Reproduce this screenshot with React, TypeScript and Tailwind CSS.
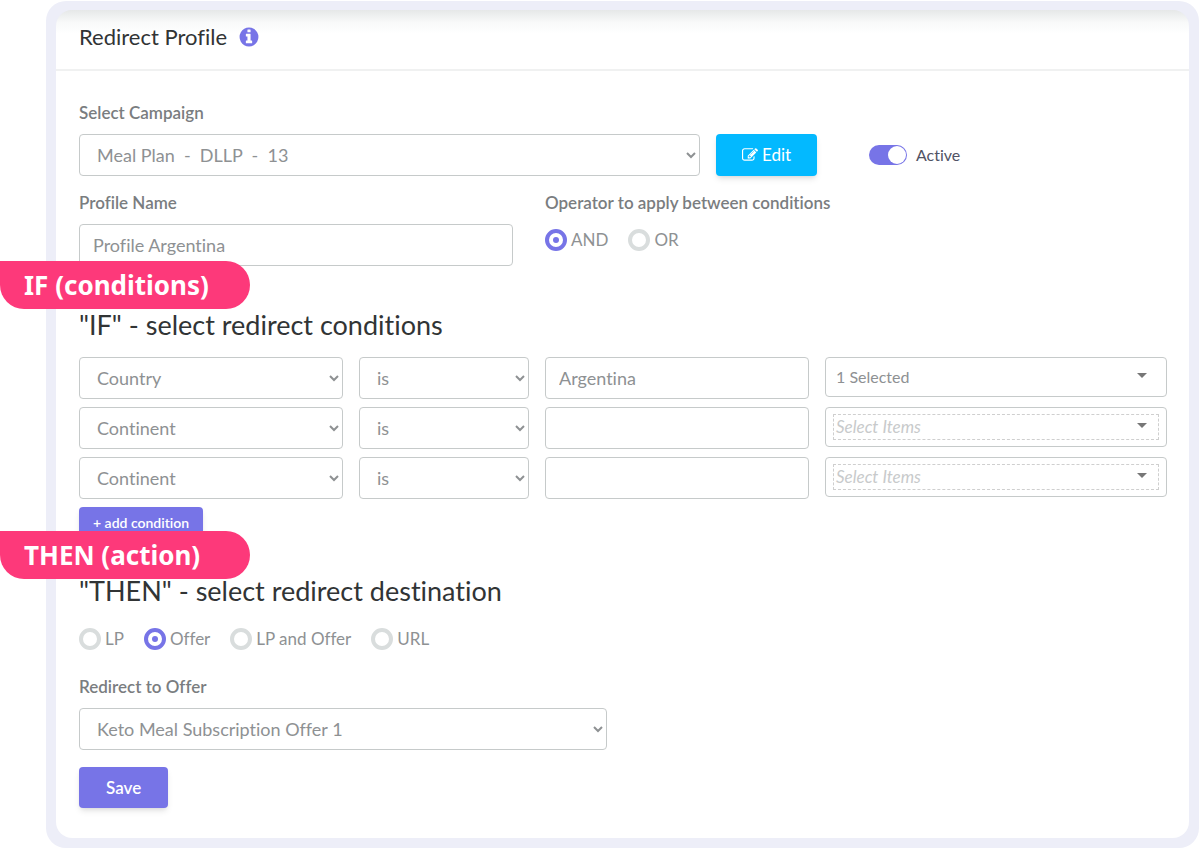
import React from "react";

interface Condition {
  field: string;
  operator: string;
  value: string;
  selected: number;
}

const conditions: Condition[] = [
  { field: "Country", operator: "is", value: "Argentina", selected: 1 },
  { field: "Continent", operator: "is", value: "", selected: 0 },
  { field: "Continent", operator: "is", value: "", selected: 0 },
];

const destinations = ["LP", "Offer", "LP and Offer", "URL"];

const controlClass =
  "h-[42px] w-full rounded border border-[#c6caca] bg-white px-[13px] text-lg text-[#8e9193] outline-none focus:border-[#7774e7]";

const labelClass = "block text-[17px] leading-6 font-semibold text-[#7a7d80]";

const InfoIcon = () => (
  <svg viewBox="0 0 1792 1792" className="size-[22px] fill-[#7774e7]" aria-hidden="true">
    <path d="M1152 1376v-160q0-14-9-23t-23-9h-96v-512q0-14-9-23t-23-9h-320q-14 0-23 9t-9 23v160q0 14 9 23t23 9h96v320h-96q-14 0-23 9t-9 23v160q0 14 9 23t23 9h448q14 0 23-9t9-23zm-128-896v-160q0-14-9-23t-23-9h-192q-14 0-23 9t-9 23v160q0 14 9 23t23 9h192q14 0 23-9t9-23zm640 416q0 209-103 385.5t-279.5 279.5-385.5 103-385.5-103-279.5-279.5-103-385.5 103-385.5 279.5-279.5 385.5-103 385.5 103 279.5 279.5 103 385.5z" />
  </svg>
);

const EditIcon = () => (
  <svg viewBox="0 0 1792 1792" className="size-4 fill-current" aria-hidden="true">
    <path d="M888 1184l116-116-152-152-116 116v56h96v96h56zm440-720q-16-16-33 1l-350 350q-17 17-1 33t33-1l350-350q17-17 1-33zm80 594v190q0 119-84.5 203.5t-203.5 84.5h-832q-119 0-203.5-84.5t-84.5-203.5v-832q0-119 84.5-203.5t203.5-84.5h832q63 0 117 25 15 7 18 23 3 17-9 29l-49 49q-14 14-32 8-23-6-45-6h-832q-66 0-113 47t-47 113v832q0 66 47 113t113 47h832q66 0 113-47t47-113v-126q0-13 9-22l64-64q15-15 35-7t20 29zm-96-738l288 288-672 672h-288v-288zm444 132l-92 92-288-288 92-92q28-28 68-28t68 28l152 152q28 28 28 68t-28 68z" />
  </svg>
);

interface RadioProps {
  name: string;
  label: string;
  defaultChecked?: boolean;
}

const Radio: React.FC<RadioProps> = ({ name, label, defaultChecked }) => (
  <label className="flex items-center gap-1 text-[17px] leading-6 text-[#8e9193]">
    <input
      type="radio"
      name={name}
      defaultChecked={defaultChecked}
      className="grid size-[22px] shrink-0 appearance-none place-items-center rounded-full border-4 border-[#d9dddd] bg-white checked:border-[#7774e7] checked:before:size-[6px] checked:before:rounded-full checked:before:bg-[#7774e7] checked:before:content-['']"
    />
    {label}
  </label>
);

const Banner: React.FC<{ className: string; children: React.ReactNode }> = ({
  className,
  children,
}) => (
  <div
    className={`absolute -left-[79px] flex h-12 w-[250px] items-center rounded-r-3xl rounded-bl-3xl bg-[#fd397a] pl-6 font-['Noto_Sans',sans-serif] text-[26px] font-bold text-white ${className}`}
  >
    {children}
  </div>
);

const MultiSelect: React.FC<{ label: string; selected: number }> = ({ label, selected }) => (
  <button
    type="button"
    aria-label={label}
    className="h-10 w-full rounded border border-[#c6caca] bg-white px-[7px] text-left"
  >
    <span
      className={`flex h-[26px] items-center justify-between border border-dashed pr-[11px] pl-[2px] leading-6 ${
        selected
          ? "border-transparent text-base text-[#8e9193]"
          : "border-[#cfcfcf] text-[17px] text-[#c8cacb] italic"
      }`}
    >
      {selected ? `${selected} Selected` : "Select Items"}
      <svg viewBox="0 0 10 5" className="mb-1 h-[5px] w-[10px] fill-[#777]" aria-hidden="true">
        <path d="M0 0h10L5 5z" />
      </svg>
    </span>
  </button>
);

const App: React.FC = () => {
  return (
    <div className="bg-white pt-px pr-px pl-[46px] font-[Lato,sans-serif] [font-variant-ligatures:none]">
      <main className="rounded-[20px] border-10 border-t-9 border-[#edeef8] bg-[#edeef8]">
        <form
          className="rounded-[16px] bg-white bg-linear-to-b from-[#e6e8e8] via-[#f8f9f9] via-[12px] to-white to-[24px]"
          onSubmit={(e) => e.preventDefault()}
        >
          <header className="flex h-[61px] items-center gap-[11px] border-b-2 border-[#f0f1f1] px-[23px] pb-[6px]">
            <h1 className="text-[22px] leading-8 text-[#313435]">Redirect Profile</h1>
            <InfoIcon />
          </header>

          <div className="pt-[30px] pr-[22px] pb-[30px] pl-[23px]">
            <section>
              <label htmlFor="campaign" className={labelClass}>
                Select Campaign
              </label>
              <div className="mt-[9px] grid grid-cols-[621fr_101fr_334fr] gap-4">
                <select id="campaign" className={controlClass}>
                  <option>{"Meal Plan \u00a0-\u00a0 DLLP \u00a0-\u00a0 13"}</option>
                </select>
                <button
                  type="button"
                  className="flex h-[42px] items-center justify-center gap-1 rounded bg-[#03b9ff] text-[17px] text-white shadow-md"
                >
                  <EditIcon />
                  Edit
                </button>
                <label className="flex items-center gap-[9px] pl-9 text-base text-[#515365]">
                  <input
                    type="checkbox"
                    role="switch"
                    defaultChecked
                    className="flex h-5 w-[38px] appearance-none items-center rounded-full bg-[#c8cacb] px-px before:size-[18px] before:rounded-full before:bg-white before:content-[''] checked:justify-end checked:bg-[#7774e7]"
                  />
                  Active
                </label>
              </div>

              <div className="mt-[15px] grid grid-cols-[434fr_622fr] gap-8">
                <div>
                  <label htmlFor="profile-name" className={labelClass}>
                    Profile Name
                  </label>
                  <input
                    id="profile-name"
                    type="text"
                    defaultValue="Profile Argentina"
                    className={`mt-[9px] ${controlClass}`}
                  />
                </div>
                <fieldset>
                  <legend className={labelClass}>Operator to apply between conditions</legend>
                  <div className="mt-[13px] flex gap-5">
                    <Radio name="operator" label="AND" defaultChecked />
                    <Radio name="operator" label="OR" />
                  </div>
                </fieldset>
              </div>
            </section>

            <section className="relative mt-[43px]">
              <Banner className="-top-12">IF (conditions)</Banner>
              <h2 className="text-[27px] leading-8 text-[#313435]">
                "IF" - select redirect conditions
              </h2>
              <div className="mt-4 flex flex-col gap-2">
                {conditions.map((condition, index) => (
                  <div key={index} className="grid grid-cols-[264fr_170fr_264fr_342fr] gap-4">
                    <select aria-label="Field" className={controlClass}>
                      <option>{condition.field}</option>
                    </select>
                    <select aria-label="Comparison" className={controlClass}>
                      <option>{condition.operator}</option>
                    </select>
                    <input
                      type="text"
                      aria-label="Value"
                      defaultValue={condition.value}
                      className={controlClass}
                    />
                    <MultiSelect label="Items" selected={condition.selected} />
                  </div>
                ))}
              </div>
              <button
                type="button"
                className="mt-2 h-8 rounded bg-[#7774e7] px-[14px] text-sm font-semibold text-white shadow-md"
              >
                + add condition
              </button>
            </section>

            <section className="relative mt-9">
              <Banner className="-top-11">THEN (action)</Banner>
              <h2 className="text-[27px] leading-8 text-[#313435]">
                "THEN" - select redirect destination
              </h2>
              <div className="mt-5 flex gap-5">
                {destinations.map((item) => (
                  <Radio
                    key={item}
                    name="destination"
                    label={item}
                    defaultChecked={item === "Offer"}
                  />
                ))}
              </div>
              <label htmlFor="offer" className={`mt-6 ${labelClass}`}>
                Redirect to Offer
              </label>
              <div className="mt-[9px] grid grid-cols-[528fr_528fr] gap-8">
                <select id="offer" className={controlClass}>
                  <option>Keto Meal Subscription Offer 1</option>
                </select>
              </div>
              <button
                type="submit"
                className="mt-[17px] block h-[41px] rounded bg-[#7774e7] px-[27px] text-[17px] font-semibold text-white shadow-md"
              >
                Save
              </button>
            </section>
          </div>
        </form>
      </main>
    </div>
  );
};

export default App;
